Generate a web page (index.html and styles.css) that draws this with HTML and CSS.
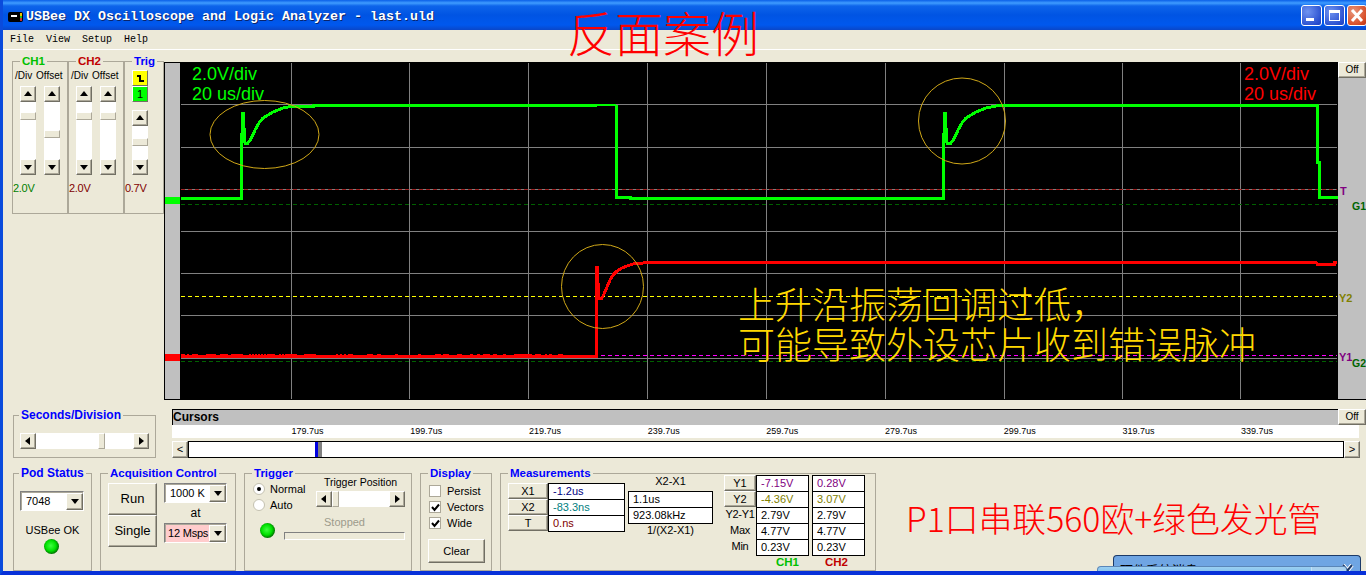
FILE: index.html
```html
<!DOCTYPE html>
<html lang="en">
<head>
<meta charset="utf-8">
<title>USBee DX Oscilloscope and Logic Analyzer</title>
<link rel="stylesheet" href="styles.css">
</head>
<body>
<div class="window">
  <header class="titlebar">
    <svg class="app-icon" width="15" height="10" viewBox="0 0 15 10"><rect width="15" height="10" rx="2" fill="#000"/><rect x="3" y="3" width="6" height="2" fill="#fff"/><rect x="12" y="1" width="2" height="3" fill="#e8c000"/><rect x="12" y="4" width="2" height="2" fill="#20c020"/><rect x="12" y="6" width="2" height="3" fill="#c03030"/></svg>
    <span class="title-text">USBee DX Oscilloscope and Logic Analyzer - last.uld</span>
    <div class="win-buttons">
      <span class="win-btn"><svg width="21" height="21" viewBox="0 0 21 21"><rect x="5" y="13" width="8" height="3" fill="#fff"/></svg></span>
      <span class="win-btn"><svg width="21" height="21" viewBox="0 0 21 21"><rect x="5.500" y="5.500" width="10" height="10" fill="none" stroke="#fff"/><rect x="5" y="5" width="11" height="3" fill="#fff"/></svg></span>
      <span class="win-btn close"><svg width="21" height="21" viewBox="0 0 21 21"><path d="M5 5l10 11M15 5L5 16" stroke="#fff" stroke-width="3"/></svg></span>
    </div>
  </header>
  <div class="banner">反面案例</div>
  <nav class="menubar">File  View  Setup  Help</nav>

  <section class="top">
    <aside class="sidebar">
      <fieldset class="box">
        <legend class="lg-green">CH1</legend>
        <div class="ch-labels">/Div Offset</div>
        <div class="vbars">
          <div class="vscroll"><span class="sb-btn up"></span><div class="vtrack"><span class="vthumb" style="margin-top:10px"></span></div><span class="sb-btn down"></span></div>
          <div class="vscroll"><span class="sb-btn up"></span><div class="vtrack"><span class="vthumb" style="margin-top:28px"></span></div><span class="sb-btn down"></span></div>
        </div>
        <div class="ch-value val-green">2.0V</div>
      </fieldset>
      <fieldset class="box">
        <legend class="lg-red">CH2</legend>
        <div class="ch-labels">/Div Offset</div>
        <div class="vbars">
          <div class="vscroll"><span class="sb-btn up"></span><div class="vtrack"><span class="vthumb" style="margin-top:10px"></span></div><span class="sb-btn down"></span></div>
          <div class="vscroll"><span class="sb-btn up"></span><div class="vtrack"><span class="vthumb" style="margin-top:10px"></span></div><span class="sb-btn down"></span></div>
        </div>
        <div class="ch-value val-red">2.0V</div>
      </fieldset>
      <fieldset class="box">
        <legend class="lg-blue">Trig</legend>
        <div class="trig-col">
          <span class="trig-btn yellow"><svg width="9" height="9" viewBox="0 0 9 9"><path d="M1 2h3v5h4" fill="none" stroke="#000" stroke-width="2"/></svg></span>
          <span class="trig-btn green">1</span>
          <div class="vscroll short"><span class="sb-btn up"></span><div class="vtrack"><span class="vthumb" style="margin-top:12px"></span></div><span class="sb-btn down"></span></div>
        </div>
        <div class="ch-value val-maroon">0.7V</div>
      </fieldset>
    </aside>

    <div class="scope">
      <svg class="plot" width="1202" height="338" viewBox="164 62 1202 338">
        <rect x="164" y="62" width="1202" height="338" fill="#c0c0c0"/>
        <rect x="164" y="62" width="1" height="338" fill="#000"/>
        <rect x="164" y="399" width="1202" height="1" fill="#000"/>
        <rect x="164" y="62" width="16" height="1" fill="#000"/>
        <rect x="180" y="62" width="1158" height="337" fill="#000"/>
        <rect x="165" y="197" width="15" height="7" fill="#00ff00"/>
        <rect x="165" y="354" width="15" height="7" fill="#ff0000"/>
        <g class="grid">
          <path d="M181 104.500H1337M181 147.500H1337M181 189.500H1337M181 231.500H1337M181 273.500H1337M181 315.500H1337M181 358.500H1337"/>
          <path d="M291.500 63V399M409.500 63V399M528.500 63V399M647.500 63V399M766.500 63V399M885.500 63V399M1004.500 63V399M1122.500 63V399M1240.500 63V399"/>
        </g>
        <path class="dash dash-red" d="M181 189.500H1337"/>
        <path class="dash dash-dgreen" d="M181 204.500H1337"/>
        <path class="dash dash-yellow" d="M181 296.500H1337"/>
        <path class="dash dash-magenta" d="M181 355.500H1337"/>
        <path class="dash dash-dgreen" d="M181 361.500H1337"/>

        <polyline class="trace green-trace" points="181,198.500 241.500,198.500 241.500,143 243,112 245,143 248,143 251,139 255,130 259,123 263,118 268,115 273,112 278,110 283,108 288,107 293,106.500 313,106.500 313,105.500 597,105.500"/>
        <polyline class="trace thin green-trace" points="597,105 616,105"/>
        <polyline class="trace green-trace" points="616,105 616,197 630,197 630,198 943.500,198 943.500,143 945,112 947,143 951,143 954,139 958,130 962,123 966,118 971,115 976,112 981,110 986,108 991,107 996,106 1003,105.500 1317,105.500 1317,162 1319,162 1319,197.500 1336,197.500 1336,199"/>
        <polyline class="trace red-trace" points="181,356 596.500,356 596.500,267 597.500,267 598.500,298 602,298 604,294 607,287 610,280 613,275 617,271 622,268 627,266 633,264 643,263 650,262 1316,262 1317,264 1334,264 1334,262.500 1337,262.500"/>
        <path class="noise" d="M181 354.500H563" stroke-dasharray="4 2 2 3 6 8 10 4 8 3 12 6 2 1 2 1 2 1 2 1 2 1 2 1 8 4 2 1 2 1 12 7 12 20 2 2 2 2 2 2 5 14 6 4 4 14 3 20 3 14 6 2 6 8 5 8 3 4 3 3 7 3 4 6 3 8 18 3 6"/>

        <ellipse class="mark" cx="264.500" cy="134.500" rx="54.500" ry="34"/>
        <ellipse class="mark" cx="962" cy="121" rx="43.500" ry="43"/>
        <ellipse class="mark" cx="602.500" cy="286.500" rx="41" ry="42"/>

        <text class="scale scale-green" x="192" y="80">2.0V/div</text>
        <text class="scale scale-green" x="192" y="100">20 us/div</text>
        <text class="scale scale-red" x="1244" y="80">2.0V/div</text>
        <text class="scale scale-red" x="1244" y="100">20 us/div</text>

        <text class="note" x="738" y="319">上升沿振荡回调过低，</text>
        <text class="note" x="738" y="359">可能导致外设芯片收到错误脉冲</text>

        <text class="tag tag-purple" x="1340" y="195">T</text>
        <text class="tag tag-dgreen tight" x="1352" y="210">G1</text>
        <text class="tag tag-olive" x="1339" y="302">Y2</text>
        <text class="tag tag-purple" x="1339" y="361">Y1</text>
        <text class="tag tag-dgreen tight" x="1352" y="367">G2</text>
      </svg>
      <span class="bevel off off-top">Off</span>
    </div>
  </section>

  <section class="mid">
    <fieldset class="box secdiv">
      <legend class="lg-blue">Seconds/Division</legend>
      <div class="hscroll sec-bar"><span class="sb-btn left"></span><div class="htrack"><span class="hthumb" style="margin-left:62px"></span></div><span class="sb-btn right"></span></div>
    </fieldset>
    <div class="cursors">
      <div class="cursor-head"><div class="cursor-title">Cursors</div><span class="bevel off">Off</span></div>
      <div class="ruler">
        <span>179.7us</span><span>199.7us</span><span>219.7us</span><span>239.7us</span><span>259.7us</span><span>279.7us</span><span>299.7us</span><span>319.7us</span><span>339.7us</span>
      </div>
      <div class="cursor-scroll">
        <span class="bevel chev">&lt;</span>
        <div class="cursor-track"><span class="cursor-blue"></span><span class="cursor-gray"></span></div>
        <span class="bevel chev">&gt;</span>
      </div>
    </div>
  </section>

  <section class="bottom">
    <fieldset class="box pod">
      <legend class="lg-blue">Pod Status</legend>
      <div class="combo pod-combo"><span class="combo-text">7048</span><span class="sb-btn down"></span></div>
      <div class="pod-ok">USBee OK</div>
      <span class="led pod-led"></span>
    </fieldset>

    <fieldset class="box acq">
      <legend class="lg-blue">Acquisition Control</legend>
      <div class="acq-row">
        <div class="acq-btns"><span class="bevel big-btn">Run</span><span class="bevel big-btn">Single</span></div>
        <div class="acq-combos">
          <div class="combo"><span class="combo-text">1000 K</span><span class="sb-btn down"></span></div>
          <div class="acq-at">at</div>
          <div class="combo pink"><span class="combo-text">12 Msps</span><span class="sb-btn down"></span></div>
        </div>
      </div>
    </fieldset>

    <fieldset class="box trigger">
      <legend class="lg-blue">Trigger</legend>
      <div class="trig-top">
        <div class="radios">
          <div class="radio-row"><span class="radio on"></span>Normal</div>
          <div class="radio-row"><span class="radio"></span>Auto</div>
        </div>
        <div class="trig-pos">
          <div class="trig-pos-label">Trigger Position</div>
          <div class="hscroll"><span class="sb-btn left"></span><div class="htrack"><span class="hthumb" style="margin-left:0"></span></div><span class="sb-btn right"></span></div>
        </div>
      </div>
      <div class="trig-state">
        <span class="led"></span>
        <div class="state-col">
          <div class="stopped">Stopped</div>
          <div class="progress"></div>
        </div>
      </div>
    </fieldset>

    <fieldset class="box display">
      <legend class="lg-blue">Display</legend>
      <div class="check-row"><span class="check"></span>Persist</div>
      <div class="check-row"><span class="check"><svg width="11" height="11" viewBox="0 0 11 11"><path d="M2 5l2.500 3L9 2.500" fill="none" stroke="#000" stroke-width="2"/></svg></span>Vectors</div>
      <div class="check-row"><span class="check"><svg width="11" height="11" viewBox="0 0 11 11"><path d="M2 5l2.500 3L9 2.500" fill="none" stroke="#000" stroke-width="2"/></svg></span>Wide</div>
      <span class="bevel clear-btn">Clear</span>
    </fieldset>

    <fieldset class="box measure">
      <legend class="lg-blue">Measurements</legend>
      <div class="measure-row">
        <div class="m-x">
          <div class="m-btns"><span class="bevel m-btn">X1</span><span class="bevel m-btn">X2</span><span class="bevel m-btn">T</span></div>
          <div class="mbox w77"><div class="c-navy">-1.2us</div><div class="c-teal">-83.3ns</div><div class="c-maroon">0.ns</div></div>
        </div>
        <div class="m-delta">
          <div class="m-cap">X2-X1</div>
          <div class="mbox w85"><div>1.1us</div><div>923.08kHz</div></div>
          <div class="m-cap">1/(X2-X1)</div>
        </div>
        <div class="m-y">
          <div class="m-ylabels">
            <span class="bevel m-btn">Y1</span><span class="bevel m-btn">Y2</span>
            <div class="m-ytxt">Y2-Y1</div><div class="m-ytxt">Max</div><div class="m-ytxt">Min</div>
          </div>
          <div class="m-ch">
            <div class="mbox w53"><div class="c-purple">-7.15V</div><div class="c-olive">-4.36V</div><div>2.79V</div><div>4.77V</div><div>0.23V</div></div>
            <div class="ch-name val-lime">CH1</div>
          </div>
          <div class="m-ch">
            <div class="mbox w53"><div class="c-purple">0.28V</div><div class="c-olive">3.07V</div><div>2.79V</div><div>4.77V</div><div>0.23V</div></div>
            <div class="ch-name val-crimson">CH2</div>
          </div>
        </div>
      </div>
    </fieldset>

    <div class="caption">P1口串联560欧+绿色发光管</div>
  </section>

  <div class="popup popup-back"><span>硬件系统消息</span>
    <svg class="popup-x" width="13" height="13" viewBox="0 0 13 13"><path d="M2 1l9 11M11 1L2 12" stroke="#fff" stroke-width="4"/><path d="M2 1l9 11M11 1L2 12" stroke="#1c3a68" stroke-width="2"/></svg>
  </div>
  <div class="popup popup-front">
    <span class="popup-dot"></span>
    <span class="popup-bar"></span>
    <span class="popup-close"><svg width="12" height="9" viewBox="0 0 12 9"><path d="M1 5l10 6M11 5L1 11" stroke="#fff" stroke-width="3"/></svg></span>
  </div>
</div>
</body>
</html>
```
FILE: styles.css
```css
* { box-sizing: border-box; }
html, body { margin: 0; padding: 0; }
body { width: 1366px; height: 575px; overflow: hidden; font: 11px/14px "Liberation Sans", Arial, sans-serif; color: #000; background: #ece9d8; }

.window { position: relative; width: 1366px; height: 575px; overflow: hidden; display: flex; flex-direction: column; background: #ece9d8; border-left: 3px solid #0a4bdc; border-bottom: 4px solid #0831d9; }

.titlebar { flex: none; height: 30px; margin-left: -3px; padding: 3px 0 0 8px; display: flex; align-items: center; background: linear-gradient(180deg, #0a5fe8 0, #3f9cff 3px, #0d64ea 6px, #0054e3 15px, #0058ee 25px, #0a46c8 30px); }
.app-icon { flex: none; margin-right: 3px; }
.title-text { font: bold 13.33px/16px "Liberation Mono", monospace; color: #fff; text-shadow: 1px 1px 0 #0a246a; white-space: pre; }
.win-buttons { margin: -3px 0 0 auto; display: flex; gap: 2px; }
.win-btn { width: 21px; height: 21px; border: 1px solid #fff; border-radius: 3px; background: radial-gradient(circle at 30% 30%, #6f93f0, #2a50d0 75%, #1b3fc0); display: block; }
.win-btn svg { display: block; margin: -1px; }
.win-btn.close { background: radial-gradient(circle at 30% 30%, #e8957a, #d8502a 70%, #b83010); width: 20px; margin-right: -1px; }

.banner { position: absolute; left: 564px; top: 6px; font: 300 48px/50px "Noto Sans CJK SC", serif; color: #f00; white-space: nowrap; }

.menubar { flex: none; height: 20px; padding-left: 7px; font: 10px/20px "Liberation Mono", monospace; white-space: pre; border-bottom: 1px solid #fff; }

.top { flex: none; height: 351px; display: flex; }
.sidebar { flex: none; width: 161px; height: 164px; padding: 5px 0 0 9px; display: grid; grid-template-columns: 56px 56px 40px; }
.box { margin: 0; padding: 0; min-width: 0; border: 1px solid #aca899; }
.box legend { padding: 0 2px; margin-left: 7px; font: bold 11.5px/13px "Liberation Sans", sans-serif; white-space: nowrap; }
.secdiv legend, .pod legend { font-size: 12px; margin-left: 5px; }
.lg-green { color: #00c000; }
.lg-red { color: #c00000; }
.lg-blue { color: #0000ff; }

.ch-labels { height: 18px; padding-left: 2px; font-size: 10px; line-height: 15px; white-space: pre; word-spacing: 1px; }
.vbars { display: flex; gap: 8px; padding-left: 7px; height: 89px; }
.vscroll { width: 16px; display: flex; flex-direction: column; }
.vscroll.short { height: 65px; margin-top: 8px; }
.vtrack { flex: 1; background: #fff; overflow: hidden; }
.vthumb { display: block; height: 8px; background: #ece9d8; border: 1px solid; border-color: #fff #aca899 #aca899 #fff; }
.ch-value { margin-top: 6px; font-size: 11px; line-height: 14px; letter-spacing: -0.3px; }
.val-green { color: #008000; }
.val-red { color: #800000; }
.val-maroon { color: #800000; }
.trig-col { height: 107px; padding: 2px 0 0 7px; }
.trig-col .ch-value { margin: 0; }
.trig-btn { display: flex; align-items: center; justify-content: center; width: 16px; height: 16px; border: 1px solid; border-color: #fff #716f64 #716f64 #fff; font-size: 11px; }
.trig-btn.yellow { background: #ff0; }
.trig-btn.green { background: #0f0; }

.sb-btn { flex: none; position: relative; display: block; width: 16px; height: 16px; background: #ece9d8; border: 1px solid; border-color: #fff #716f64 #716f64 #fff; box-shadow: inset -1px -1px 0 #aca899; }
.sb-btn::before { content: ""; position: absolute; left: 50%; top: 50%; width: 0; height: 0; border-style: solid; border-color: transparent; }
.up::before { margin: -3px 0 0 -4px; border-width: 0 4px 5px; border-bottom-color: #000; }
.down::before { margin: -2px 0 0 -4px; border-width: 5px 4px 0; border-top-color: #000; }
.left::before { margin: -4px 0 0 -3px; border-width: 4px 5px 4px 0; border-right-color: #000; }
.right::before { margin: -4px 0 0 -2px; border-width: 4px 0 4px 5px; border-left-color: #000; }

.hscroll { display: flex; width: 89px; height: 16px; }
.htrack { flex: 1; background: #fff; overflow: hidden; }
.hthumb { display: block; width: 7px; height: 16px; background: #ece9d8; border: 1px solid; border-color: #fff #aca899 #aca899 #fff; }

.scope { position: relative; flex: none; width: 1202px; height: 351px; margin-top: 12px; }
.plot { display: block; }
.grid path { stroke: #808080; fill: none; }
.dash { fill: none; stroke-dasharray: 4 3; }
.dash-red { stroke: #a02020; }
.dash-dgreen { stroke: #006000; }
.dash-yellow { stroke: #ffff00; }
.dash-magenta { stroke: #ff00ff; }
.trace { fill: none; stroke-width: 3; shape-rendering: crispEdges; stroke-linejoin: miter; }
.trace.thin { stroke-width: 2; }
.green-trace { stroke: #00ff00; }
.red-trace { stroke: #ff0000; }
.noise { fill: none; stroke: #ff0000; stroke-width: 1; shape-rendering: crispEdges; }
.mark { fill: none; stroke: #d0a818; }
.scale { font: 18px "Liberation Sans", sans-serif; }
.scale-green { fill: #00ff00; }
.scale-red { fill: #ff0000; }
.note { font: 300 37px/39px "Noto Sans CJK SC", serif; fill: #ffd800; }
.tag { font: bold 11px "Liberation Sans", sans-serif; }
.tag.tight { font-size: 10.500px; }
.tag-purple { fill: #800080; }
.tag-dgreen { fill: #006400; }
.tag-olive { fill: #808000; }

.bevel { display: flex; align-items: center; justify-content: center; background: #ece9d8; border: 1px solid; border-color: #fff #716f64 #716f64 #fff; box-shadow: inset -1px -1px 0 #aca899; }
.off { flex: none; width: 28px; height: 16px; font-size: 10px; }
.off-top { position: absolute; right: 0; top: 0; }

.mid { flex: none; height: 66px; padding: 8px 0 0 10px; display: flex; gap: 16px; }
.secdiv { flex: none; width: 143px; height: 49px; }
.sec-bar { width: 129px; margin: 11px 0 0 6px; }

.cursors { flex: 1; min-width: 0; }
.cursor-head { display: flex; height: 16px; }
.cursor-title { flex: none; width: 1166px; background: #c0c0c0; border-top: 1px solid #000; border-left: 1px solid #000; font: bold 12px/15px "Liberation Sans", sans-serif; }
.ruler { width: 1187px; height: 13px; padding-left: 119.600px; display: flex; background: #fff; font-size: 9px; line-height: 13px; }
.ruler span { flex: none; width: 118.700px; }
.cursor-scroll { display: flex; height: 17px; margin-top: 3px; width: 1188px; }
.chev { flex: none; width: 16px; font: 11px/14px "Liberation Mono", monospace; }
.cursor-track { flex: 1; display: flex; padding-left: 126px; background: #fff; border: 1px solid #000; }
.cursor-blue { width: 3px; background: #0000e0; }
.cursor-gray { width: 4px; background: #808080; }

.bottom { flex: 1; min-height: 0; padding-left: 10px; display: flex; gap: 8px; }
.pod { flex: none; width: 79px; }
.combo { display: flex; align-items: center; width: 63px; height: 20px; background: #fff; border: 1px solid; border-color: #808080 #fff #fff #808080; box-shadow: inset 1px 1px 0 #aca899; }
.combo .sb-btn { margin-left: auto; width: 17px; height: 17px; }
.combo-text { padding-left: 5px; white-space: nowrap; }
.combo.pink { background: linear-gradient(90deg, #ffcccc 46px, #ece9d8 46px); }
.pink .combo-text { padding-left: 3px; letter-spacing: -0.2px; }
.pod-combo { width: 64px; margin: 11px 0 0 6px; }
.pod-ok { margin-top: 12px; text-align: center; }
.led { flex: none; display: block; width: 15px; height: 15px; border-radius: 50%; background: radial-gradient(circle at 45% 45%, #40ff40 0, #00e000 45%, #006000 75%, #203020 100%); }
.pod-led { margin: 2px 0 0 30px; }

.acq { flex: none; width: 136px; }
.acq-row { display: flex; gap: 7px; padding: 3px 0 0 7px; }
.acq-btns { width: 49px; }
.big-btn { height: 32px; font-size: 13px; }
.acq-combos { width: 63px; }
.acq-at { height: 20px; font-size: 12px; line-height: 20px; text-align: center; }

.trigger { flex: none; width: 168px; }
.trig-top { display: flex; margin-top: -5px; }
.radios { width: 71px; padding: 6px 0 0 8px; }
.radio-row { display: flex; align-items: center; height: 16px; gap: 5px; }
.radio { flex: none; position: relative; width: 12px; height: 12px; border-radius: 50%; background: #fff; border: 1px solid #c4c1b0; }
.radio.on::after { content: ""; position: absolute; left: 3px; top: 3px; width: 4px; height: 4px; border-radius: 50%; background: #000; }
.trig-pos { width: 89px; }
.trig-pos-label { height: 16px; text-align: center; font-size: 10.500px; line-height: 15px; white-space: nowrap; }
.trig-state { display: flex; gap: 9px; padding: 2px 0 0 15px; }
.trig-state .led { margin-top: 8px; }
.state-col { width: 121px; }
.stopped { height: 15px; text-align: center; color: #9d9b8c; }
.progress { height: 8px; margin-top: 2px; background: #ece9d8; border: 1px solid; border-color: #808080 #fff #fff #808080; }

.display { flex: none; width: 72px; }
.check-row { display: flex; align-items: center; gap: 6px; height: 16px; padding-left: 8px; }
.check-row:first-of-type { margin-top: 3px; }
.check { flex: none; width: 12px; height: 12px; background: #fff; border: 1px solid #aca899; }
.check svg { display: block; margin: 0 0 0 -0.500px; }
.clear-btn { width: 57px; height: 24px; margin: 8px 0 0 7px; }

.measure { flex: none; width: 376px; }
.measure-row { display: flex; align-items: flex-start; margin-top: -5px; }
.m-x { display: flex; align-items: flex-start; margin: 8px 0 0 7px; }
.m-btns { width: 40px; }
.m-btn { height: 16px; }
.mbox { border: 1px solid #000; background: #fff; }
.mbox > div { height: 16px; padding-left: 4px; line-height: 14px; border-bottom: 1px solid #000; }
.mbox > div:last-child { height: 15px; border-bottom: 0; }
.w77 { width: 77px; }
.w85 { width: 85px; }
.w53 { width: 53px; }
.c-navy { color: #000080; }
.c-teal { color: #008080; }
.c-maroon { color: #800000; }
.c-purple { color: #800080; }
.c-olive { color: #808000; }
.m-delta { width: 85px; margin-left: 3px; }
.m-cap { height: 16px; text-align: center; line-height: 12px; }
.m-y { display: flex; margin-left: 11px; }
.m-ylabels { width: 32px; }
.m-ytxt { height: 16px; text-align: center; line-height: 15px; white-space: nowrap; letter-spacing: -0.3px; }
.m-ch { width: 53px; margin-right: 3px; }
.ch-name { font: bold 11.500px/12px "Liberation Sans", sans-serif; }
.val-lime { color: #00c000; padding-left: 20px; }
.val-crimson { color: #c00000; padding-left: 13px; }

.caption { flex: none; margin: 31px 0 0 22px; font: 300 33.800px/40px "Noto Sans CJK SC", serif; color: #f00; white-space: nowrap; }

.popup { position: absolute; overflow: hidden; border: 1px solid #1c3a68; border-bottom: 0; border-radius: 4px 4px 0 0; }
.popup-back { left: 1110px; top: 555px; width: 248px; height: 20px; background: #6fa5e3; font: 13px/14px "Noto Sans CJK SC", sans-serif; padding: 7px 0 0 6px; }
.popup-x { position: absolute; right: 6px; top: 8px; }
.popup-front { left: 1094px; top: 566px; width: 250px; height: 9px; background: linear-gradient(180deg, #9ad0f2, #7ab9ea); border-color: #5a86b8; }
.popup-dot { position: absolute; left: 10px; top: 6px; width: 10px; height: 10px; border-radius: 50%; background: #a8d020; }
.popup-bar { position: absolute; left: 30px; top: 5px; width: 62px; height: 5px; background: #c4e4f8; }
.popup-close { position: absolute; right: 0; top: 0; width: 35px; height: 9px; padding-left: 12px; background: #a8d0ee; border-left: 1px solid #c4e0f4; }
.popup-close svg { display: block; }
```
